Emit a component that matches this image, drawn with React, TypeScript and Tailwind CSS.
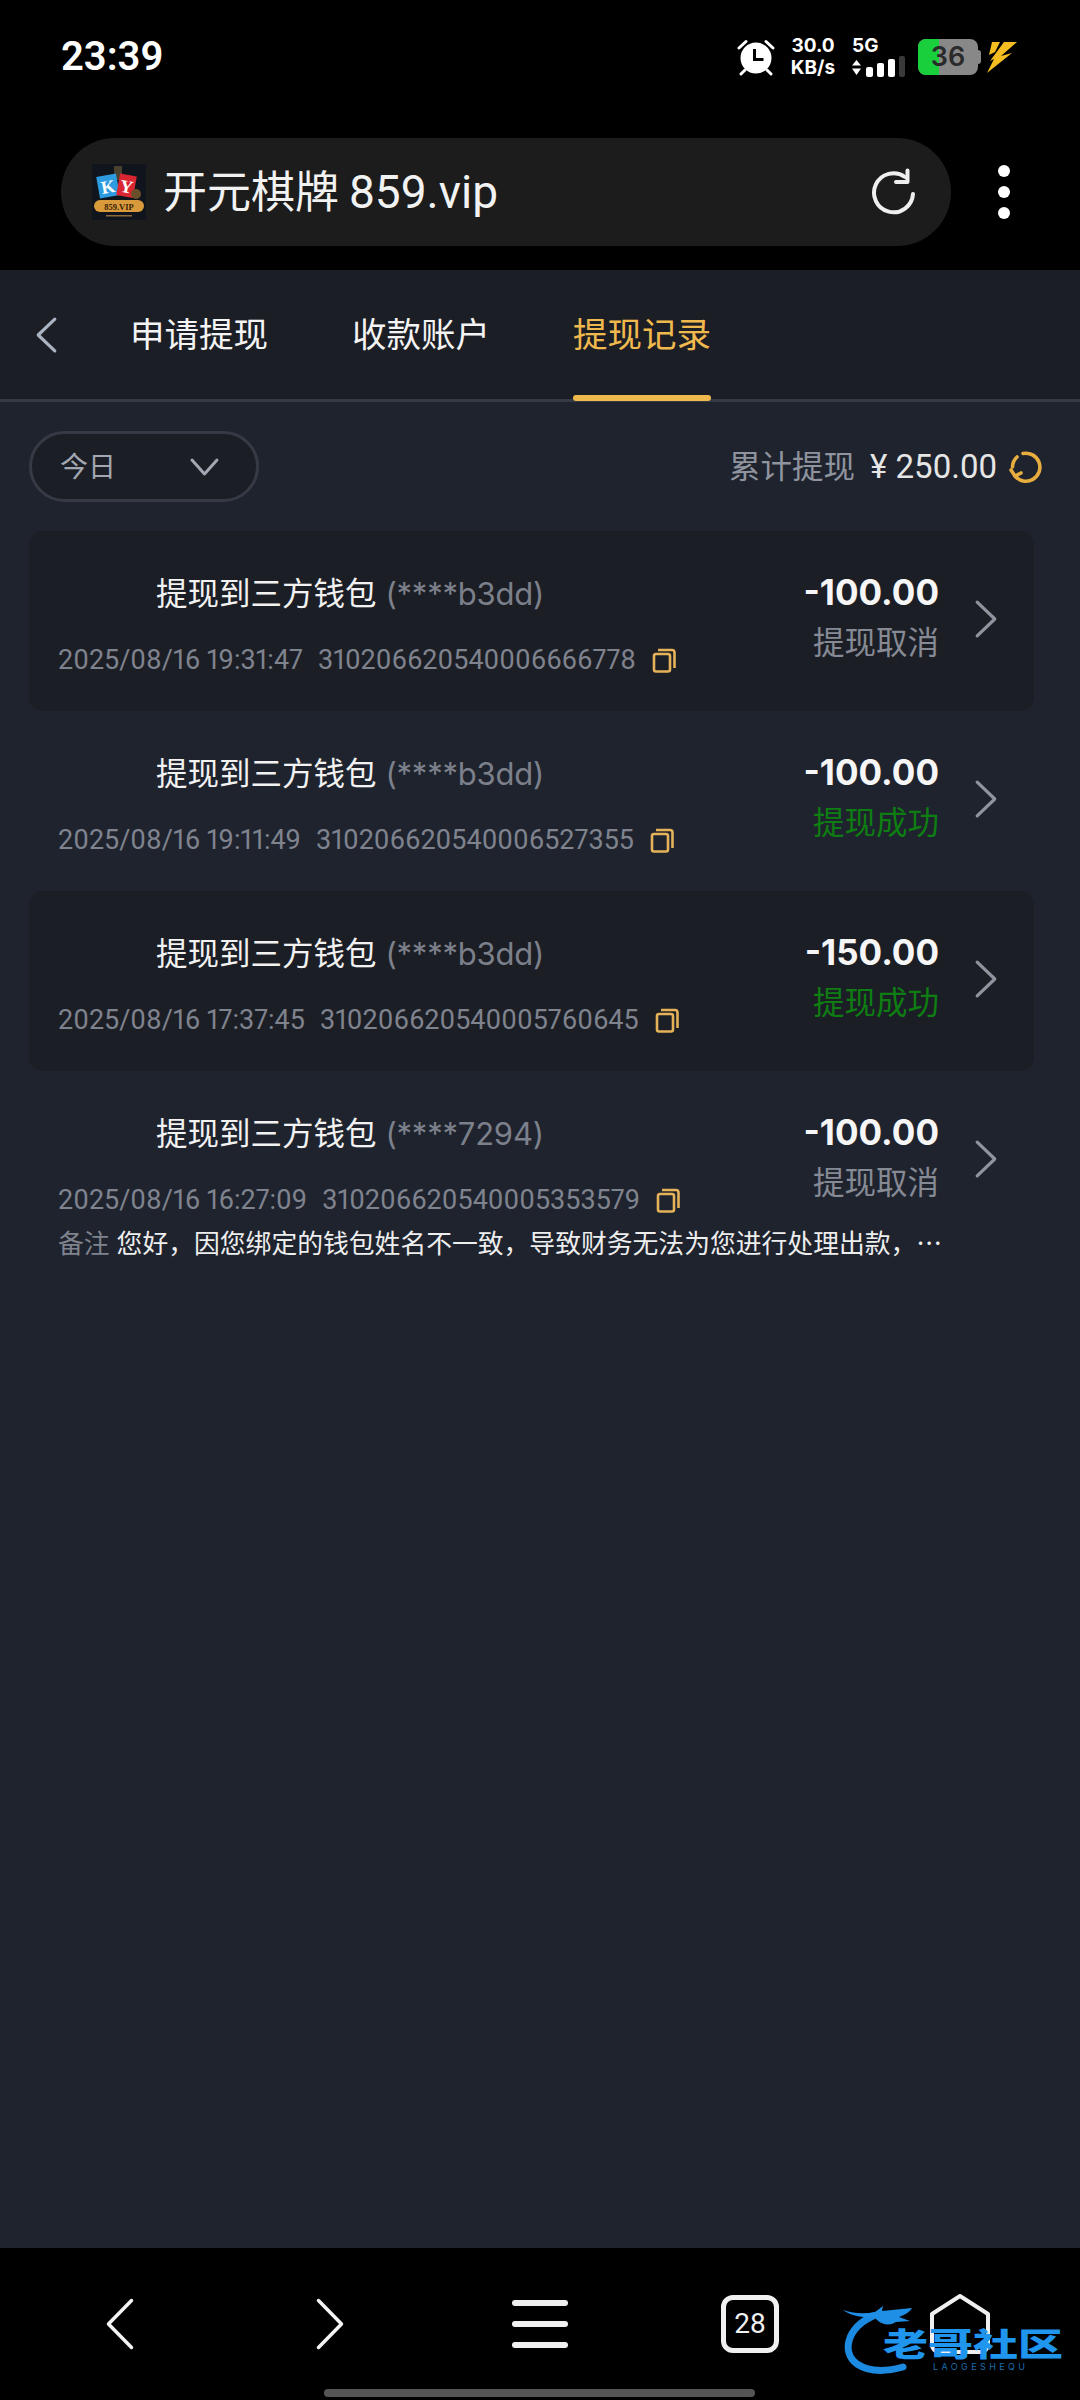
import React from "react";

const FONT = { fontFamily: '"Inter", "Noto Sans CJK SC", sans-serif' };
const NARROW = { fontFamily: '"Roboto", "Noto Sans CJK SC", sans-serif' };
const CJK = { fontFamily: '"Noto Sans CJK SC", sans-serif' };

type Row = {
  wallet: string;
  amount: string;
  status: string;
  ok: boolean;
  date: string;
  order: string;
  note?: string;
};

const rows: Row[] = [
  { wallet: "(****b3dd)", amount: "-100.00", status: "提现取消", ok: false, date: "2025/08/16 19:31:47", order: "310206620540006666778" },
  { wallet: "(****b3dd)", amount: "-100.00", status: "提现成功", ok: true, date: "2025/08/16 19:11:49", order: "310206620540006527355" },
  { wallet: "(****b3dd)", amount: "-150.00", status: "提现成功", ok: true, date: "2025/08/16 17:37:45", order: "310206620540005760645" },
  {
    wallet: "(****7294)",
    amount: "-100.00",
    status: "提现取消",
    ok: false,
    date: "2025/08/16 16:27:09",
    order: "310206620540005353579",
    note: "您好，因您绑定的钱包姓名不一致，导致财务无法为您进行处理出款，…",
  },
];

function Alarm() {
  return (
    <svg width="38" height="38" viewBox="0 0 38 38" fill="none">
      <circle cx="19" cy="20" r="15.5" fill="#fff" />
      <path d="M17.5 11v10.5h9" stroke="#000" strokeWidth="3" />
      <path d="M2 10 9 3.5M36 10 29 3.5" stroke="#fff" strokeWidth="3" strokeLinecap="round" />
      <path d="M8 32 4 36M30 32l4 4" stroke="#fff" strokeWidth="3" strokeLinecap="round" />
    </svg>
  );
}

function Signal() {
  return (
    <svg width="54" height="22" viewBox="0 0 54 22">
      <path d="M4.5 4 9 9.5H0zM4.5 19 0 12.5h9z" fill="#fff" />
      <rect x="14" y="11" width="7" height="10" rx="2" fill="#fff" />
      <rect x="25" y="7" width="7" height="14" rx="2" fill="#fff" />
      <rect x="36" y="3" width="7" height="18" rx="2" fill="#fff" />
      <rect x="47" y="0" width="6" height="21" rx="2" fill="#3a3a3a" />
    </svg>
  );
}

function Bolt() {
  return (
    <svg width="30" height="32" viewBox="0 0 30 32" fill="#f5bd1f">
      <path d="M5 1h8L8 11l-6 3z" />
      <path d="M17 1h13L14 15l11-3L0 32l7-14-4 2z" />
    </svg>
  );
}

function Favicon() {
  return (
    <svg width="54" height="56" viewBox="0 0 54 56" className="shrink-0">
      <rect width="54" height="56" fill="#10141c" />
      <rect x="22" y="2" width="8" height="14" fill="#4a4030" />
      <g transform="rotate(-10 16 22)">
        <rect x="6" y="11" width="20" height="22" fill="#2d9be0" />
        <text x="16" y="29" fontSize="18" fontWeight="700" fill="#fff" textAnchor="middle" fontFamily="Liberation Serif, serif">K</text>
      </g>
      <g transform="rotate(10 36 22)">
        <rect x="26" y="11" width="17" height="22" fill="#d92632" />
        <text x="34.5" y="29" fontSize="18" fontWeight="700" fill="#fff" textAnchor="middle" fontFamily="Liberation Serif, serif">Y</text>
      </g>
      <circle cx="44" cy="30" r="5" fill="#6b4f2a" />
      <rect x="2" y="36" width="50" height="12" rx="6" fill="#d99a3c" />
      <text x="27" y="45.5" fontSize="8.5" fontWeight="700" fill="#3a2208" textAnchor="middle" fontFamily="Liberation Serif, serif">859.VIP</text>
      <rect x="14" y="51" width="26" height="1.5" fill="#8a6a38" />
    </svg>
  );
}

function Refresh() {
  return (
    <svg width="48" height="48" viewBox="0 0 48 48" fill="none" stroke="#efefef" strokeWidth="4" strokeLinecap="round" strokeLinejoin="round">
      <path d="M43 26a19.5 19.5 0 1 1-8-17" />
      <path d="M37.5 2.5v11.5H26" />
    </svg>
  );
}

function Chevron({ dir, color, w, h, sw }: { dir: "l" | "r" | "d"; color: string; w: number; h: number; sw: number }) {
  const d =
    dir === "l"
      ? `M${w - sw} ${sw} L${sw} ${h / 2} L${w - sw} ${h - sw}`
      : dir === "r"
        ? `M${sw} ${sw} L${w - sw} ${h / 2} L${sw} ${h - sw}`
        : `M${sw} ${sw} L${w / 2} ${h - sw} L${w - sw} ${sw}`;
  return (
    <svg width={w} height={h} viewBox={`0 0 ${w} ${h}`} fill="none" stroke={color} strokeWidth={sw} strokeLinecap="round" strokeLinejoin="round" className="shrink-0">
      <path d={d} />
    </svg>
  );
}

function CopyIcon() {
  return (
    <svg width="24" height="25" viewBox="0 0 24 25" fill="none" stroke="#e5b259" strokeWidth="2.6" strokeLinejoin="round" className="shrink-0">
      <rect x="2" y="6" width="16" height="17.5" rx="2" />
      <path d="M6 2h14a2.5 2.5 0 0 1 2.5 2.5V20" />
    </svg>
  );
}

function Reload() {
  return (
    <svg width="34" height="34" viewBox="0 0 34 34" fill="none" stroke="#e8ad3f" strokeWidth="3.6" strokeLinecap="round" strokeLinejoin="round" className="shrink-0">
      <path d="M14 3.5A14 14 0 1 1 6 26" />
      <path d="M3.5 17A14 14 0 0 1 8 7" />
      <path d="M2 20l4 6 6-3" />
    </svg>
  );
}

function Dragon() {
  return (
    <svg width="92" height="70" viewBox="0 0 92 70" fill="none">
      <path d="M30 12C4 24-2 48 14 60c12 8 28 8 46 3" stroke="#1c8ae0" strokeWidth="7" strokeLinecap="round" />
      <path d="M0 6c12 4 22 4 32 2l8-6-1 5 30-3c-3 5-8 7-13 9l11 4-14 1c-8 5-16 2-22-5C20 14 8 12 0 6z" fill="#1f8fe6" />
    </svg>
  );
}

export default function App() {
  return (
    <div className="relative flex h-[2400px] w-[1080px] flex-col overflow-hidden bg-black text-white" style={FONT}>
      {/* status bar */}
      <div className="flex h-[114px] shrink-0 items-center justify-between pl-[61px] pr-[63px]">
        <span className="text-[40px] font-semibold leading-none" style={NARROW}>23:39</span>
        <div className="flex items-center">
          <Alarm />
          <div className="ml-[14px] flex w-[48px] flex-col items-center text-[19px] font-bold leading-[22px]">
            <span>30.0</span>
            <span>KB/s</span>
          </div>
          <div className="ml-[15px] flex flex-col items-start">
            <span className="text-[19px] font-bold leading-[20px]">5G</span>
            <Signal />
          </div>
          <div className="relative ml-[12px] flex h-[36px] w-[60px] items-center justify-center overflow-hidden rounded-[8px] bg-[#888888] text-[27px] font-semibold text-[#2a2a2a]">
            <div className="absolute inset-y-0 left-0 w-[21px] bg-[#19cf3c]" />
            <span className="relative">36</span>
          </div>
          <div className="h-[14px] w-[3px] rounded-r bg-[#888888]" />
          <div className="ml-[6px]">
            <Bolt />
          </div>
        </div>
      </div>

      {/* browser address bar */}
      <div className="flex h-[156px] shrink-0 items-start pl-[61px] pt-[24px]">
        <div className="flex h-[108px] w-[890px] items-center rounded-[54px] bg-[#1c1c1c] pl-[31px] pr-[33px]">
          <Favicon />
          <span className="ml-[17px] text-[44px] leading-none text-[#f2f2f2]">开元棋牌</span>
          <span className="ml-[10px] text-[46px] leading-none text-[#f2f2f2]" style={NARROW}>859.vip</span>
          <div className="ml-auto">
            <Refresh />
          </div>
        </div>
        <div className="ml-[47px] mt-[27px] flex flex-col gap-[9px]">
          <div className="h-[12px] w-[12px] rounded-full bg-white" />
          <div className="h-[12px] w-[12px] rounded-full bg-white" />
          <div className="h-[12px] w-[12px] rounded-full bg-white" />
        </div>
      </div>

      {/* page */}
      <div className="flex min-h-0 flex-1 flex-col bg-[#1f232e]">
        {/* tabs */}
        <div className="flex h-[132px] shrink-0 items-stretch border-b-[3px] border-[#363a44] bg-[#1c1e26] pl-[35px]">
          <div className="flex w-[95px] items-center">
            <Chevron dir="l" color="#aab3c2" w={23} h={38} sw={3.2} />
          </div>
          <div className="flex w-[222px] items-center text-[34.5px] text-[#f4f4f4]">申请提现</div>
          <div className="flex w-[221px] items-center text-[34.5px] text-[#f4f4f4]">收款账户</div>
          <div className="relative flex w-[138px] items-center text-[34.5px] text-[#f0b94d]">
            提现记录
            <div className="absolute inset-x-0 bottom-[-2px] h-[6px] rounded-[3px] bg-[#f0b94d]" />
          </div>
        </div>

        {/* filter and total */}
        <div className="flex h-[129px] shrink-0 items-center justify-between pl-[29px] pr-[37px]">
          <div className="flex h-[71px] w-[230px] items-center justify-between rounded-[36px] border-[3px] border-[#363a44] bg-[#1c1e26] pl-[28px] pr-[36px]">
            <span className="text-[28px] text-[#a3a7b1]">今日</span>
            <Chevron dir="d" color="#a3a7b1" w={31} h={20} sw={3} />
          </div>
          <div className="flex items-center">
            <span className="text-[31.5px] text-[#8f949e]">累计提现</span>
            <span className="ml-[15px] text-[33px] text-[#e6e6e6]" style={NARROW}>¥ 250.00</span>
            <div className="ml-[12px]">
              <Reload />
            </div>
          </div>
        </div>

        {/* withdrawal records */}
        <div className="flex flex-col pl-[29px] pr-[46px]">
          {rows.map((r, i) => (
            <div key={i} className={`flex h-[180px] items-start rounded-[14px] ${i % 2 === 0 ? "bg-[#1c1e26]" : ""}`}>
              <div className="relative min-w-0 flex-1 pl-[29px]">
                <div className="mt-[39px] pl-[98px] text-[31.5px] leading-[48px] text-[#f2f2f2]">
                  提现到三方钱包 <span className="text-[31px] tracking-[-0.2px] text-[#7c808b]">{r.wallet}</span>
                </div>
                <div className="mt-[22px] flex items-center whitespace-nowrap text-[27px] leading-[40px] text-[#7f838e] proportional-nums" style={NARROW}>
                  <span>{r.date}</span>
                  <span className="ml-[15px]">{r.order}</span>
                  <span className="ml-[16px]">
                    <CopyIcon />
                  </span>
                </div>
                {r.note && (
                  <div className="mt-[4px] flex w-[950px] whitespace-nowrap text-[25.8px] leading-[36px]" style={CJK}>
                    <span className="text-[#7f838e]">备注</span>
                    <span className="ml-[7px] text-[#eeeeee]">{r.note}</span>
                  </div>
                )}
              </div>
              <div className="mt-[36px] flex w-[203px] shrink-0 flex-col items-end">
                <span className="text-[35px] font-bold leading-[50px] text-[#f6f6f6]">{r.amount}</span>
                <span className={`text-[31.5px] leading-[52px] ${r.ok ? "text-[#0e7d12]" : "text-[#868a94]"}`}>{r.status}</span>
              </div>
              <div className="ml-[35px] mr-[36px] mt-[68px]">
                <Chevron dir="r" color="#8f949e" w={24} h={40} sw={3.2} />
              </div>
            </div>
          ))}
        </div>
      </div>

      {/* bottom navigation */}
      <div className="relative h-[152px] shrink-0 bg-black">
        <div className="grid h-[152px] grid-cols-5 items-center px-[15px]">
          <div className="flex justify-center"><Chevron dir="l" color="#f4f4f4" w={30} h={54} sw={3.5} /></div>
          <div className="flex justify-center"><Chevron dir="r" color="#f4f4f4" w={30} h={54} sw={3.5} /></div>
          <div className="flex justify-center">
            <div className="flex w-[56px] flex-col gap-[15px]">
              <div className="h-[6px] rounded-[3px] bg-[#f0f0f0]" />
              <div className="h-[6px] rounded-[3px] bg-[#f0f0f0]" />
              <div className="h-[6px] rounded-[3px] bg-[#f0f0f0]" />
            </div>
          </div>
          <div className="flex justify-center">
            <div className="flex h-[58px] w-[58px] items-center justify-center rounded-[12px] border-[5px] border-[#f0f0f0] text-[28px] text-[#f0f0f0]" style={NARROW}>28</div>
          </div>
          <div className="flex justify-center">
            <svg width="62" height="62" viewBox="0 0 62 62" fill="none" stroke="#f0f0f0" strokeWidth="4" strokeLinejoin="round">
              <path d="M31 3 59 21v31a7 7 0 0 1-7 7H10a7 7 0 0 1-7-7V21z" />
            </svg>
          </div>
        </div>
        <div className="absolute left-[324px] top-[141px] h-[8px] w-[431px] rounded-[4px] bg-[#555555]" />

        {/* community watermark */}
        <div className="absolute left-[843px] top-[56px] h-[70px] w-[225px]">
          <div className="absolute left-0 top-0"><Dragon /></div>
          <div className="absolute left-[40px] top-[19px] origin-center scale-y-[0.72] whitespace-nowrap text-[45px] font-black leading-[38px] text-[#1f95ee]" style={CJK}>老哥社区</div>
          <div className="absolute left-[90px] top-[58px] whitespace-nowrap text-[9px] leading-[10px] tracking-[3.4px] text-[#1a6db0]">LAOGESHEQU</div>
        </div>
      </div>
    </div>
  );
}
